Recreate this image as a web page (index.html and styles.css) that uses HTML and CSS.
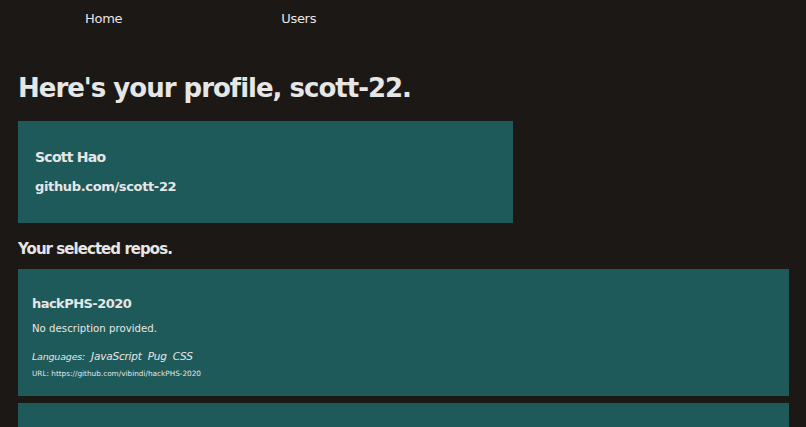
FILE: index.html
```html
<!DOCTYPE html>
<html lang="en">
<head>
<meta charset="utf-8">
<title>Profile</title>
<link rel="stylesheet" href="styles.css">
</head>
<body>
<nav class="nav">
  <a class="nav-link" href="#">Home</a>
  <a class="nav-link" href="#">Users</a>
</nav>
<main class="main">
  <h1 class="title">Here's your profile, scott-22.</h1>
  <section class="profile-card">
    <h2 class="profile-name">Scott Hao</h2>
    <p class="profile-link">github.com/scott-22</p>
  </section>
  <h2 class="section-title">Your selected repos.</h2>
  <section class="repo-card">
    <h3 class="repo-name">hackPHS-2020</h3>
    <p class="repo-desc">No description provided.</p>
    <p class="repo-langs"><span class="langs-label">Languages:</span><span class="lang">JavaScript</span><span class="lang">Pug</span><span class="lang">CSS</span></p>
    <p class="repo-url">URL: https://github.com/vibindi/hackPHS-2020</p>
  </section>
  <section class="repo-card"></section>
</main>
</body>
</html>
```
FILE: styles.css
```css
html, body {
  margin: 0;
  padding: 0;
  background: #1c1815;
  color: #e6e6e6;
  font-family: "DejaVu Sans", sans-serif;
}
body {
  padding: 0 17px 0 18px;
}
.nav {
  display: flex;
  height: 36px;
  align-items: center;
  padding-left: 67px;
  gap: 159px;
}
.nav-link {
  color: #e6e6e6;
  text-decoration: none;
  font-size: 13px;
  letter-spacing: -0.3px;
}
.main {
  display: flex;
  flex-direction: column;
}
.title {
  margin: 35px 0 0;
  font-size: 26px;
  line-height: 34px;
  font-weight: bold;
  letter-spacing: -1px;
}
.profile-card {
  margin-top: 16px;
  width: 495px;
  height: 102px;
  box-sizing: border-box;
  background: #1e5a59;
  padding: 27px 17px 0;
}
.profile-name {
  margin: 0;
  font-size: 14px;
  line-height: 18px;
  letter-spacing: -0.75px;
}
.profile-link {
  margin: 12px 0 0;
  font-size: 13px;
  font-weight: bold;
  line-height: 18px;
  letter-spacing: -0.35px;
}
.section-title {
  margin: 16px 0 0;
  font-size: 15px;
  line-height: 20px;
  letter-spacing: -0.95px;
}
.repo-card {
  margin-top: 10px;
  height: 127px;
  box-sizing: border-box;
  background: #1e5a59;
  padding: 27px 14px 0;
}
.repo-card + .repo-card {
  margin-top: 7px;
}
.repo-name {
  margin: 0;
  font-size: 13px;
  line-height: 16px;
  letter-spacing: -0.55px;
}
.repo-desc {
  margin: 10px 0 0;
  font-size: 10.2px;
  line-height: 14px;
}
.repo-langs {
  margin: 12px 0 0;
  font-style: italic;
  font-size: 10.5px;
  line-height: 16px;
  letter-spacing: -0.2px;
}
.langs-label {
  font-size: 9.5px;
}
.lang {
  margin-left: 6px;
}
.repo-url {
  margin: 4px 0 0;
  font-size: 7.3px;
  line-height: 10px;
}
```
